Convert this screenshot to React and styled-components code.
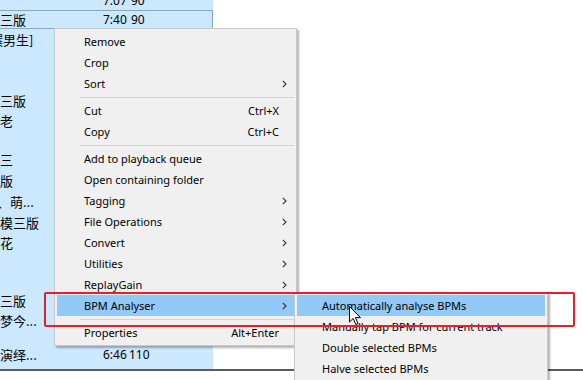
import styled, { createGlobalStyle } from 'styled-components';

const GlobalStyle = createGlobalStyle`
  html, body { margin: 0; padding: 0; background: #fff; }
  body { width: 583px; height: 380px; overflow: hidden; }
`;

const Screen = styled.div`
  position: relative;
  width: 583px;
  height: 380px;
  overflow: hidden;
  background: #fff;
  font-family: "Noto Sans", "Noto Sans CJK SC", sans-serif;
  color: #000;
`;

const Window = styled.div`
  display: flex;
  height: 369px;
  border-bottom: 2px solid #5c5c5c;
  overflow: hidden;
`;

const ListPane = styled.div`
  width: 213px;
  flex: none;
  background: #cce8ff;
  overflow: hidden;
`;

const Rows = styled.div`
  margin-top: -10px;
  display: flex;
  flex-direction: column;
`;

const Row = styled.div`
  box-sizing: border-box;
  height: ${(p) => p.$h}px;
  display: flex;
  align-items: center;
  font-size: 13px;
  font-family: "Noto Sans CJK SC", "Noto Sans", sans-serif;
  white-space: nowrap;
  border-top: 1px solid ${(p) => (p.$focus ? '#8aa8c6' : 'transparent')};
  border-bottom: 1px solid ${(p) => (p.$focus ? '#8aa8c6' : 'transparent')};
  border-right: 1px solid ${(p) => (p.$focus ? '#8aa8c6' : 'transparent')};
`;

const Title = styled.span`
  width: 103px;
  flex: none;
  overflow: hidden;
  margin-left: ${(p) => p.$shift || 0}px;
`;

const Time = styled.span`
  width: 26px;
  flex: none;
  font-family: "Noto Sans", sans-serif;
  font-size: 12px;
`;

const Bpm = styled.span`
  font-family: "Noto Sans", sans-serif;
  font-size: 12px;
  padding-left: ${(p) => (p.$wide ? 0 : 2)}px;
`;

const Menu = styled.div`
  position: absolute;
  left: ${(p) => p.$x}px;
  top: ${(p) => p.$y}px;
  width: ${(p) => p.$w}px;
  height: ${(p) => p.$h || 'auto'};
  box-sizing: border-box;
  padding: 2px;
  background: #f0f0f0;
  border: 1px solid #c9c9c9;
  box-shadow: 2px 2px 2px rgba(0, 0, 0, 0.3);
  display: flex;
  flex-direction: column;
  overflow: hidden;
  font-size: 11px;
`;

const Item = styled.div`
  height: 21px;
  flex: none;
  display: flex;
  align-items: center;
  padding-left: ${(p) => p.$indent}px;
  padding-right: 7px;
  background: ${(p) => (p.$active ? '#91c9f7' : 'transparent')};
  white-space: nowrap;
`;

const Label = styled.span`
  flex: 1;
`;

const Shortcut = styled.span`
  margin-right: 8px;
`;

const Separator = styled.div`
  height: 6px;
  flex: none;
  display: flex;
  align-items: center;
  padding-left: 23px;
  &::after {
    content: '';
    flex: 1;
    height: 1px;
    background: #d4d4d4;
  }
`;

const Highlight = styled.div`
  position: absolute;
  left: 44px;
  top: 292px;
  width: 531px;
  height: 35px;
  box-sizing: border-box;
  border: 2px solid #e3202b;
  border-radius: 2px;
`;

const Cursor = styled.svg`
  position: absolute;
  left: 349px;
  top: 306px;
`;

const Arrow = () => (
  <svg width="5" height="8" viewBox="0 0 5 8">
    <polyline points="0.8,0.8 4,4 0.8,7.2" fill="none" stroke="#333" strokeWidth="1.1" />
  </svg>
);

const rows = [
  { h: 20, time: '7:07', bpm: '90' },
  { h: 19, title: '三版', time: '7:40', bpm: '90', focus: true },
  { h: 21, title: '撰男生]', shift: -10 },
  { h: 20 },
  { h: 20 },
  { h: 20, title: '三版' },
  { h: 20, title: '老' },
  { h: 19 },
  { h: 21, title: '三' },
  { h: 21, title: '版' },
  { h: 21, title: '、萌...', shift: -3 },
  { h: 20, title: '模三版' },
  { h: 20, title: '花' },
  { h: 19 },
  { h: 19 },
  { h: 20, title: '三版' },
  { h: 20, title: '梦今...' },
  { h: 14 },
  { h: 20, title: '演绎...', time: '6:46', bpm: '110' },
];

const mainItems = [
  { label: 'Remove' },
  { label: 'Crop' },
  { label: 'Sort', sub: true },
  { sep: true },
  { label: 'Cut', key: 'Ctrl+X' },
  { label: 'Copy', key: 'Ctrl+C' },
  { sep: true },
  { label: 'Add to playback queue' },
  { label: 'Open containing folder' },
  { label: 'Tagging', sub: true },
  { label: 'File Operations', sub: true },
  { label: 'Convert', sub: true },
  { label: 'Utilities', sub: true },
  { label: 'ReplayGain', sub: true },
  { label: 'BPM Analyser', sub: true, active: true },
  { sep: true },
  { label: 'Properties', key: 'Alt+Enter' },
];

const subItems = [
  { label: 'Automatically analyse BPMs', active: true },
  { label: 'Manually tap BPM for current track' },
  { label: 'Double selected BPMs' },
  { label: 'Halve selected BPMs' },
];

export default function App() {
  return (
    <Screen>
      <GlobalStyle />
      <Window>
        <ListPane>
          <Rows>
            {rows.map((r, i) => (
              <Row key={i} $h={r.h} $focus={r.focus}>
                <Title $shift={r.shift}>{r.title || ''}</Title>
                <Time>{r.time || ''}</Time>
                <Bpm $wide={r.bpm && r.bpm.length > 2}>{r.bpm || ''}</Bpm>
              </Row>
            ))}
          </Rows>
        </ListPane>
      </Window>

      <Menu $x={54} $y={28} $w={243}>
        {mainItems.map((it, i) =>
          it.sep ? (
            <Separator key={i} />
          ) : (
            <Item key={i} $indent={27} $active={it.active}>
              <Label>{it.label}</Label>
              {it.key && <Shortcut>{it.key}</Shortcut>}
              {it.sub && <Arrow />}
            </Item>
          ),
        )}
      </Menu>

      <Menu $x={294} $y={292} $w={254} $h="90px">
        {subItems.map((it, i) => (
          <Item key={i} $indent={25} $active={it.active}>
            <Label>{it.label}</Label>
          </Item>
        ))}
      </Menu>

      <Highlight />

      <Cursor width="13" height="20" viewBox="0 0 13 20">
        <path d="M0.5 0.5 L0.5 16 L4.2 12.4 L6.8 18.5 L9 17.6 L6.5 11.6 L11.5 11.6 Z" fill="#fff" stroke="#000" strokeWidth="1" strokeLinejoin="round" />
      </Cursor>
    </Screen>
  );
}
